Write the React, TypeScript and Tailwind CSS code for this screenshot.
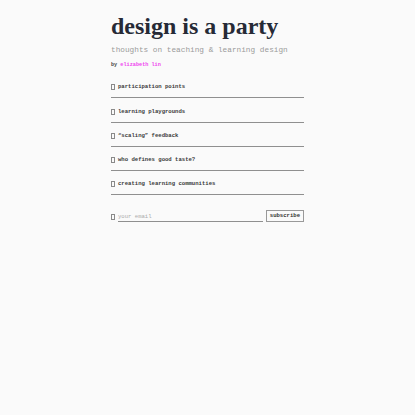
const topics = [
  "participation points",
  "learning playgrounds",
  "\u201cscaling\u201d feedback",
  "who defines good taste?",
  "creating learning communities",
];

const mono = { fontFamily: '"Liberation Mono", "DejaVu Sans Mono", monospace' };

function Tofu() {
  return <span className="inline-block w-[4px] h-[6px] border border-[#8a8a8a] mr-[3px] shrink-0" />;
}

export default function App() {
  return (
    <div className="min-h-screen bg-[#fafafa] text-[#1f2330]">
      <div className="mx-auto w-[193px] pt-[14px]">
        <h1
          className="text-[24px] leading-none font-bold text-[#262a36]"
          style={{ fontFamily: '"Liberation Serif", "DejaVu Serif", serif' }}
        >
          design is a party
        </h1>
        <p className="mt-[7px] text-[7.75px] leading-[10px] text-[#9b9b9b]" style={mono}>
          thoughts on teaching &amp; learning design
        </p>
        <p className="mt-[6px] text-[5.2px] leading-[8px] font-bold text-[#444]" style={mono}>
          by <span className="text-[#ef47ef]">elizabeth lin</span>
        </p>

        <ul className="mt-[5px]">
          {topics.map((t) => (
            <li
              key={t}
              className="flex items-center pt-[8.25px] pb-[5px] border-b border-[#8f8f8f] text-[5.6px] leading-[10px] font-bold text-[#3a3a3a]"
              style={mono}
            >
              <Tofu />
              {t}
            </li>
          ))}
        </ul>

        <form className="mt-[15px] flex items-end" style={mono} onSubmit={(e) => e.preventDefault()}>
          <div className="flex items-center mb-[2px]">
            <Tofu />
          </div>
          <input
            placeholder="your email"
            className="w-[145px] h-[11px] bg-transparent border-b border-[#8f8f8f] text-[5.6px] outline-none placeholder:text-[#aaa]"
          />
          <button className="ml-auto h-[12px] px-[3px] border border-[#999] text-[5.6px] font-bold text-[#333] bg-[#fafafa]">
            subscribe
          </button>
        </form>
      </div>
    </div>
  );
}
